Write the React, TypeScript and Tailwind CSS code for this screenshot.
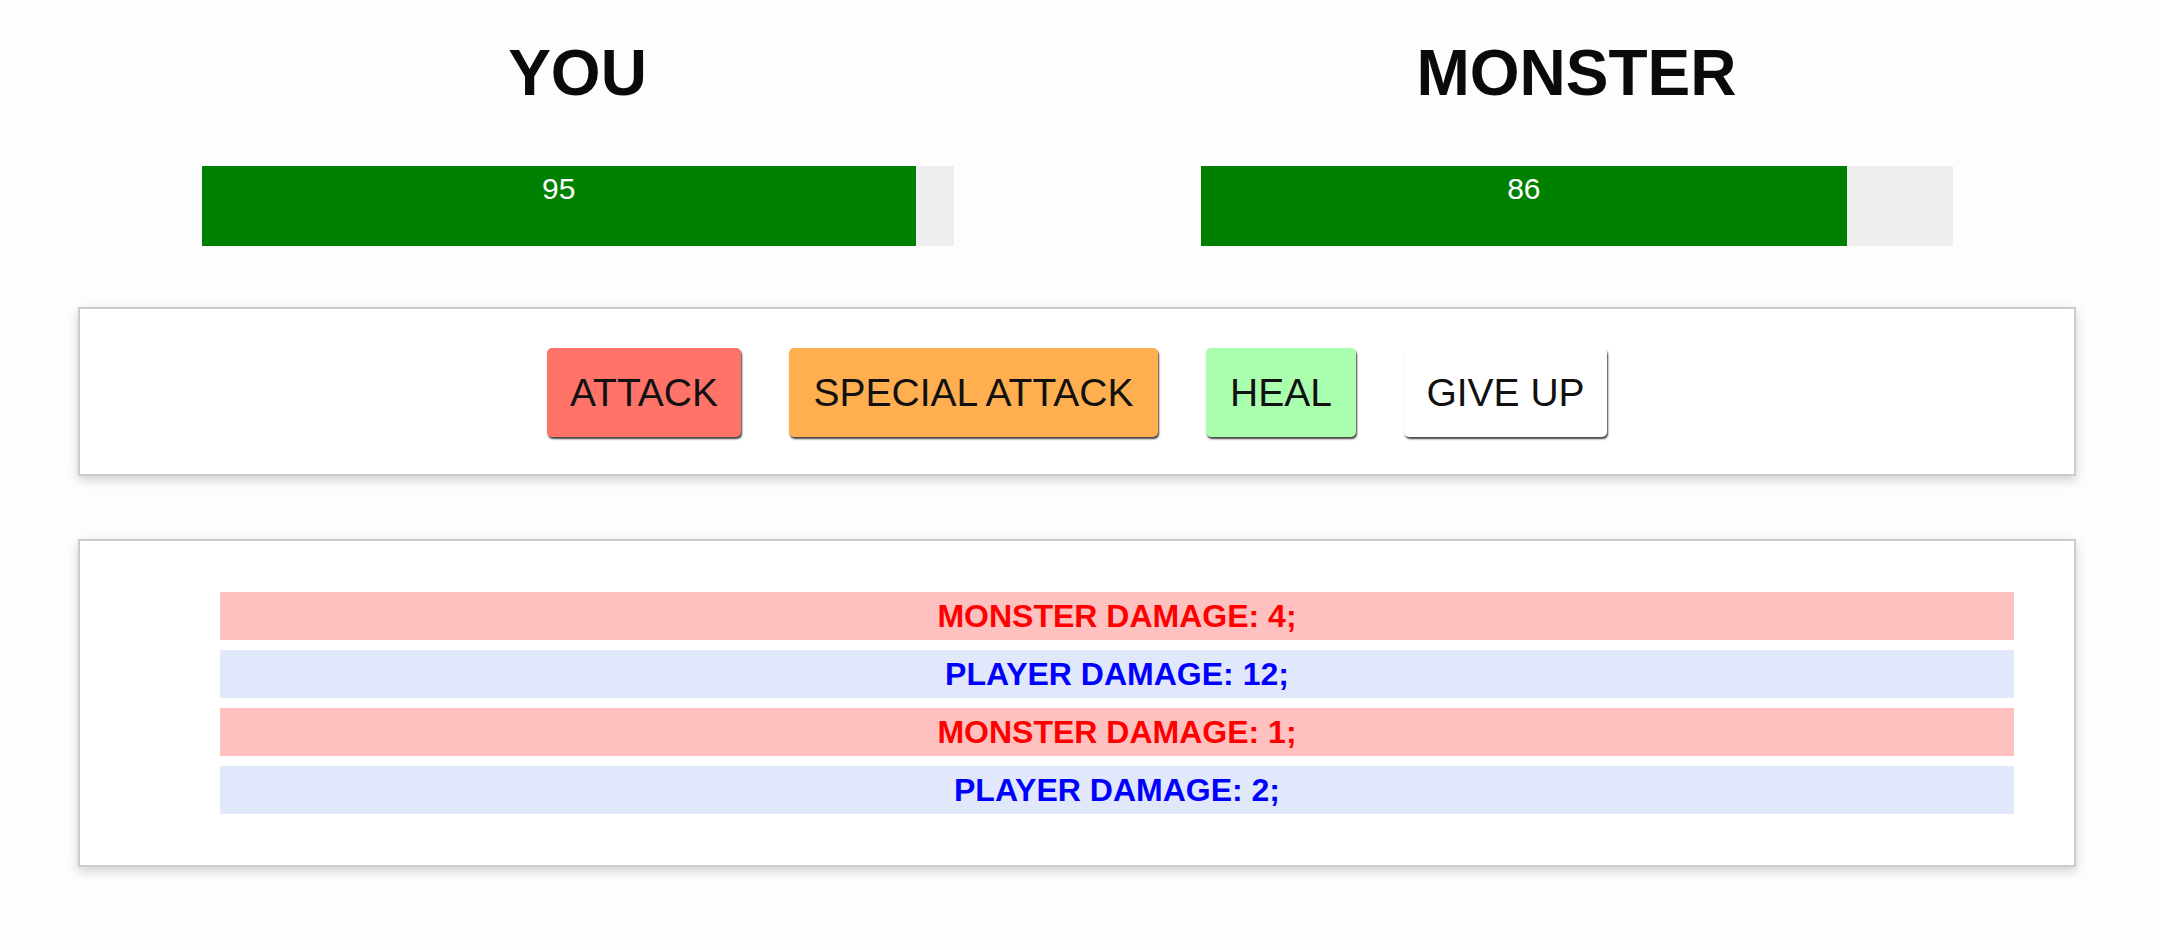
import React from "react";

const font = { fontFamily: '"Liberation Sans", Arial, Helvetica, sans-serif' };

function Combatant({ name, value }: { name: string; value: number }) {
  return (
    <div className="flex flex-1 flex-col items-center">
      <h1 className="mt-[36px] text-[64px] font-bold leading-[74px] text-[#0a0a0a]">{name}</h1>
      <div className="mt-[56px] h-[80px] w-[752px] bg-[#eeeeee]">
        <div
          className="h-full bg-[#008000] pt-[6px] text-center text-[30px] leading-[34px] text-white"
          style={{ width: `${value}%` }}
        >
          {value}
        </div>
      </div>
    </div>
  );
}

const buttons = [
  { label: "ATTACK", cls: "w-[194px] bg-[#ff7368]" },
  { label: "SPECIAL ATTACK", cls: "w-[369px] bg-[#ffae50]" },
  { label: "HEAL", cls: "w-[150px] bg-[#aaffae]" },
  { label: "GIVE UP", cls: "w-[203px] bg-white" },
];

const log = [
  { text: "MONSTER DAMAGE: 4;", monster: true },
  { text: "PLAYER DAMAGE: 12;", monster: false },
  { text: "MONSTER DAMAGE: 1;", monster: true },
  { text: "PLAYER DAMAGE: 2;", monster: false },
];

export default function App() {
  return (
    <div className="min-h-[950px] w-[2160px] bg-[#fdfdfd] pb-[60px]" style={font}>
      <div className="ml-[78px] flex w-[1998px]">
        <Combatant name="YOU" value={95} />
        <Combatant name="MONSTER" value={86} />
      </div>

      <section className="ml-[78px] mt-[61px] flex h-[169px] w-[1998px] items-center justify-center gap-[48px] border-2 border-[#cccccc] bg-white pt-[2px] shadow-[0_4px_10px_rgba(0,0,0,0.18)]">
        {buttons.map((b) => (
          <button
            key={b.label}
            className={`h-[89px] rounded-[5px] px-0 text-center text-[39px] leading-[46px] text-[#111] shadow-[1px_2px_2px_rgba(0,0,0,0.75)] ${b.cls}`}
            style={font}
          >
            {b.label}
          </button>
        ))}
      </section>

      <section className="ml-[78px] mt-[63px] w-[1998px] border-2 border-[#cccccc] bg-white px-[60px] py-[51px] shadow-[0_4px_10px_rgba(0,0,0,0.18)]">
        <ul className="flex flex-col gap-[10px] pl-[80px]">
          {log.map((l, i) => (
            <li
              key={i}
              className={`h-[48px] text-center text-[32px] font-bold leading-[48px] ${
                l.monster ? "bg-[#ffc0c0] text-[#ff0000]" : "bg-[#e2e8fc] text-[#0000ff]"
              }`}
            >
              {l.text}
            </li>
          ))}
        </ul>
      </section>
    </div>
  );
}
